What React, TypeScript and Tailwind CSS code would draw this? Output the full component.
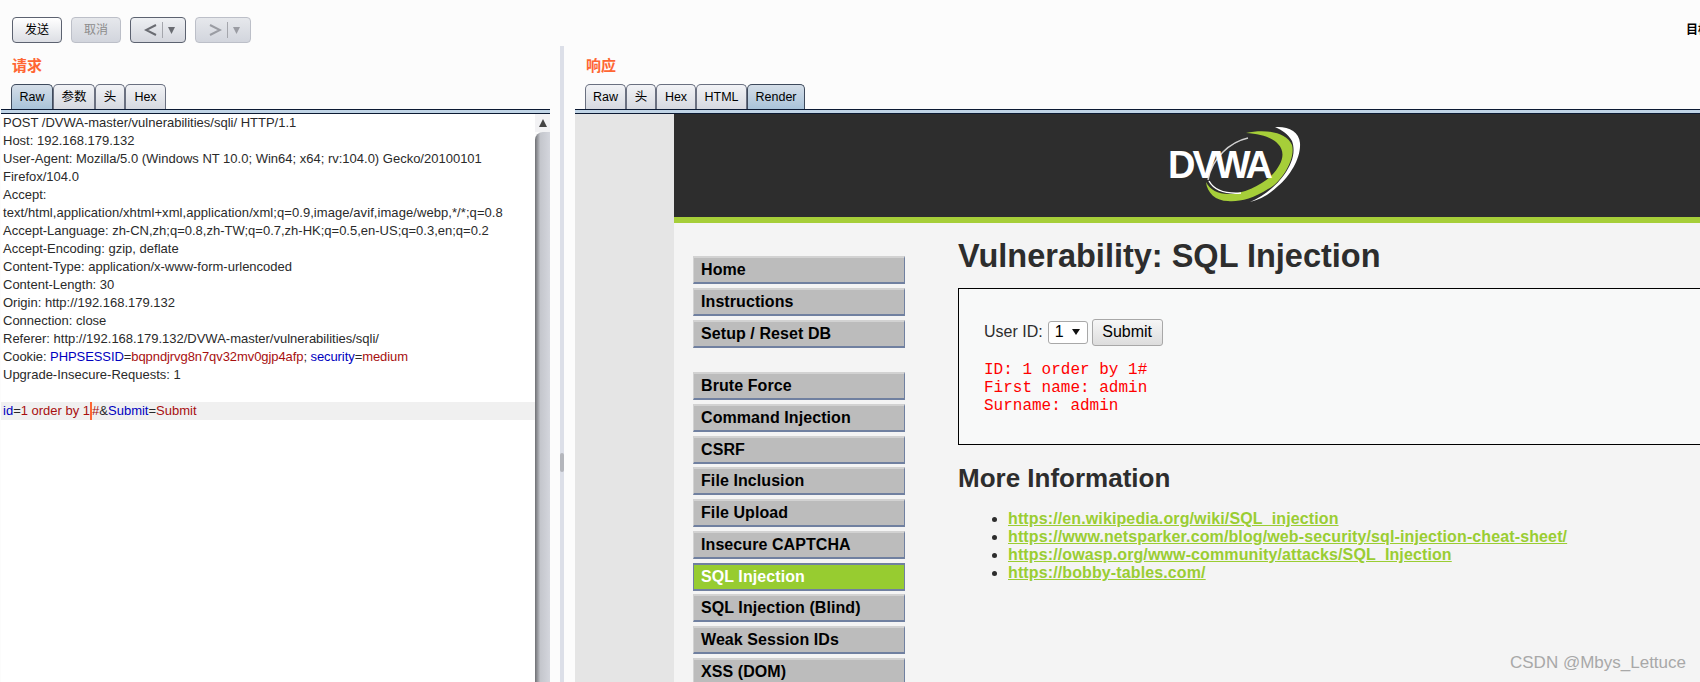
const blue = "text-[#0000c0]";
const red = "text-[#a80f0f]";

const requestLines = [
  "POST /DVWA-master/vulnerabilities/sqli/ HTTP/1.1",
  "Host: 192.168.179.132",
  "User-Agent: Mozilla/5.0 (Windows NT 10.0; Win64; x64; rv:104.0) Gecko/20100101",
  "Firefox/104.0",
  "Accept:",
  "text/html,application/xhtml+xml,application/xml;q=0.9,image/avif,image/webp,*/*;q=0.8",
  "Accept-Language: zh-CN,zh;q=0.8,zh-TW;q=0.7,zh-HK;q=0.5,en-US;q=0.3,en;q=0.2",
  "Accept-Encoding: gzip, deflate",
  "Content-Type: application/x-www-form-urlencoded",
  "Content-Length: 30",
  "Origin: http://192.168.179.132",
  "Connection: close",
  "Referer: http://192.168.179.132/DVWA-master/vulnerabilities/sqli/",
];

const menuTop = ["Home", "Instructions", "Setup / Reset DB"];
const menuVulns = [
  "Brute Force",
  "Command Injection",
  "CSRF",
  "File Inclusion",
  "File Upload",
  "Insecure CAPTCHA",
  "SQL Injection",
  "SQL Injection (Blind)",
  "Weak Session IDs",
  "XSS (DOM)",
];

const links = [
  "https://en.wikipedia.org/wiki/SQL_injection",
  "https://www.netsparker.com/blog/web-security/sql-injection-cheat-sheet/",
  "https://owasp.org/www-community/attacks/SQL_Injection",
  "https://bobby-tables.com/",
];

function ToolButton({label, disabled}: {label: string; disabled?: boolean}) {
  return (
    <div
      className={`w-[50px] h-[26px] rounded-[4px] border flex items-center justify-center text-[12px] bg-linear-to-b ${
        disabled
          ? "border-[#bcbfc8] from-[#e6e8ec] to-[#d2d5dd] text-[#8c8c8c]"
          : "border-[#5c6270] from-[#ffffff] to-[#dcdee4] text-black"
      }`}
    >
      {label}
    </div>
  );
}

function ArrowButton({dir, disabled}: {dir: "left" | "right"; disabled?: boolean}) {
  const stroke = disabled ? "#9a9ca3" : "#6a6c72";
  return (
    <div
      className={`w-[56px] h-[26px] rounded-[4px] border flex items-center pl-[13px] bg-linear-to-b ${
        disabled
          ? "border-[#bcbfc8] from-[#e6e8ec] to-[#d2d5dd]"
          : "border-[#5c6270] from-[#eef0f3] to-[#d4d6dd]"
      }`}
    >
      <svg width="13" height="14" viewBox="0 0 13 14" fill="none" stroke={stroke} strokeWidth="2">
        <path d={dir === "left" ? "M12 2 2 7l10 5" : "M1 2l10 5-10 5"} />
      </svg>
      <div className="w-px h-[16px] bg-[#a4a6ac] ml-[5px] mr-[5px]" />
      <svg width="7" height="7" viewBox="0 0 7 7" fill={stroke}>
        <path d="M0 0h7L3.500 7z" />
      </svg>
    </div>
  );
}

function Tab({label, active, width}: {label: string; active?: boolean; width: string}) {
  return (
    <div
      className={`${width} h-[25px] rounded-t-[5px] border border-b-0 flex items-center justify-center text-[12.5px] text-black bg-linear-to-b ${
        active
          ? "border-[#3e4a5c] from-[#d5dee8] to-[#a9c3d9]"
          : "border-[#6a7080] from-[#f2f3f6] to-[#d6d9e0]"
      }`}
    >
      {label}
    </div>
  );
}

function Band() {
  return <div className="h-[5px] shrink-0 border-y border-[#0c1a33] bg-[#c0d4e6]" />;
}

function MenuItem({label}: {label: string}) {
  const active = label === "SQL Injection";
  return (
    <div
      className={`h-[28px] shrink-0 border-t-2 border-l border-r border-b-2 pl-[7px] flex items-center text-[16px] font-bold tracking-[0.08px] ${
        active
          ? "bg-[#97cc30] text-white border-t-[#7080a0] border-l-[#7080a0] border-r-[#7080a0] border-b-[#7080a0]"
          : "bg-[#bcbcbc] text-black border-t-[#d2d2d2] border-l-[#d2d2d2] border-r-[#7080a0] border-b-[#7080a0]"
      }`}
    >
      {label}
    </div>
  );
}

function Logo() {
  return (
    <svg width="134" height="78" viewBox="0 0 134 78" className="mt-[12px]">
      <path d="M107 1C120 0 131 5 132 17 133 32 122 50 110 60 102 68 92 74 82 76 95 71 108 60 116 49 124 38 128 26 124 15 120 8 114 4 107 1z" fill="#ffffff" />
      <path d="M78 7C95 3 118 5 124 19 128 34 112 58 100 63 85 73 70 76 60 75 48 75 39 67 38 56 42 64 50 68 60 68 75 68 92 60 103 50 115 38 118 26 110 18 104 11 92 8 78 7z" fill="#a6ce39" />
      <path d="M80 12C62 16 44 32 40 54" fill="none" stroke="#d0d0d0" strokeWidth="1.5" />
      <path d="M41 55C46 64 58 68 73 67" fill="none" stroke="#ffffff" strokeWidth="1.5" />
      <text x="0" y="52" fontFamily="'Liberation Sans', sans-serif" fontWeight="700" fontSize="38" letterSpacing="-3" fill="#ffffff">
        DVWA
      </text>
    </svg>
  );
}

export default function App() {
  return (
    <div className="relative w-[1700px] h-[682px] overflow-hidden bg-[#fcfcfc] flex flex-col font-['Liberation_Sans','Noto_Sans_CJK_SC',sans-serif]">
      <div className="h-[46px] shrink-0 flex items-start pt-[17px] pl-[12px] gap-[9px]">
        <ToolButton label="发送" />
        <ToolButton label="取消" disabled />
        <ArrowButton dir="left" />
        <ArrowButton dir="right" disabled />
        <div className="ml-auto mr-0 w-[14px] overflow-hidden whitespace-nowrap text-[12px] font-bold text-black mt-[4px]">
          目标: http
        </div>
      </div>

      <div className="flex-1 min-h-0 flex">
        {/* request pane */}
        <div className="w-[549px] ml-px shrink-0 flex flex-col">
          <div className="h-[38px] shrink-0 pl-[11px] pt-[11px] text-[15px] leading-[18px] font-bold text-[#ff6633]">请求</div>
          <div className="flex pl-[10px] shrink-0">
            <Tab label="Raw" active width="w-[42px]" />
            <Tab label="参数" width="w-[42px]" />
            <Tab label="头" width="w-[30px]" />
            <Tab label="Hex" width="w-[41px]" />
          </div>
          <Band />
          <div className="flex-1 min-h-0 flex">
            <div className="flex-1 bg-white text-[13px] leading-[18px] text-[#2a2a2a] whitespace-nowrap overflow-hidden">
              {requestLines.map((line) => (
                <div key={line} className={`pl-[2px] h-[18px] ${line.startsWith("text/html") ? "tracking-[0.07px]" : ""}`}>
                  {line}
                </div>
              ))}
              <div className="pl-[2px] h-[18px] tracking-[-0.08px]">
                Cookie: <span className={blue}>PHPSESSID</span>=<span className={red}>bqpndjrvg8n7qv32mv0gjp4afp</span>; <span className={blue}>security</span>=<span className={red}>medium</span>
              </div>
              <div className="pl-[2px] h-[18px]">Upgrade-Insecure-Requests: 1</div>
              <div className="h-[18px]" />
              <div className="pl-[2px] h-[18px] bg-[#f0f0f0]">
                <span className={blue}>id</span>=<span className={red}>1 order by 1</span>
                <span className="inline-block w-[2px] h-[18px] bg-[#ff6633] align-top" />
                <span className={red}>#</span>&amp;<span className={blue}>Submit</span>=<span className={red}>Submit</span>
              </div>
            </div>
            <div className="w-[15px] shrink-0 flex flex-col">
              <div className="h-[18px] shrink-0 bg-[#f2f2f4] flex items-center justify-center">
                <svg width="8" height="8" viewBox="0 0 8 8" fill="#444">
                  <path d="M4 0l4 8H0z" />
                </svg>
              </div>
              <div className="flex-1 rounded-tl-[8px] bg-linear-to-r from-[#6f7074] via-[#c4c6cc] via-35% to-[#d4d6dd]" />
            </div>
          </div>
        </div>

        {/* splitter */}
        <div className="w-[10px] shrink-0" />
        <div className="w-[4px] shrink-0 bg-[#dcdfe8] flex flex-col items-center pt-[407px]">
          <div className="w-[4px] h-[19px] rounded-[2px] bg-[#b4b6bc]" />
        </div>
        <div className="w-[11px] shrink-0" />

        {/* response pane */}
        <div className="flex-1 min-w-0 flex flex-col">
          <div className="h-[38px] shrink-0 pl-[11px] pt-[11px] text-[15px] leading-[18px] font-bold text-[#ff6633]">响应</div>
          <div className="flex pl-[10px] shrink-0">
            <Tab label="Raw" width="w-[41px]" />
            <Tab label="头" width="w-[30px]" />
            <Tab label="Hex" width="w-[40px]" />
            <Tab label="HTML" width="w-[51px]" />
            <Tab label="Render" active width="w-[58px]" />
          </div>
          <Band />
          <div className="flex-1 min-h-0 flex">
            <div className="w-[99px] shrink-0 bg-[#e5e5e5]" />
            <div className="flex-1 min-w-0 flex flex-col bg-[#f4f4f4]">
              <div className="h-[109px] shrink-0 bg-[#2d2d2d] border-b-[6px] border-[#a6ce39] flex justify-center">
                <div className="ml-[96px]">
                  <Logo />
                </div>
              </div>
              <div className="flex-1 min-h-0 flex overflow-hidden">
                <div className="w-[212px] ml-[19px] shrink-0 pt-[33px] flex flex-col gap-[3.75px]">
                  {menuTop.map((m) => (
                    <MenuItem key={m} label={m} />
                  ))}
                  <div className="h-[17px] shrink-0" />
                  {menuVulns.map((m) => (
                    <MenuItem key={m} label={m} />
                  ))}
                </div>
                <div className="ml-[53px] flex-1 min-w-0 text-[#2d2d2d]">
                  <h1 className="pt-[15px] text-[32.5px] leading-[37px] font-bold whitespace-nowrap">Vulnerability: SQL Injection</h1>
                  <div className="mt-[13px] w-[800px] h-[157px] border border-black bg-[#f8f9f9] pl-[25px]">
                    <div className="mt-[29px] h-[28px] flex items-center text-[16px]">
                      <span>User ID:</span>
                      <div className="ml-[5px] w-[40px] h-[23px] rounded-[3px] border border-[#a8a8a8] bg-white flex items-center pl-[6px] gap-[8px] text-black">
                        1
                        <svg width="8" height="6" viewBox="0 0 8 6" fill="#111">
                          <path d="M0 0h8L4 6z" />
                        </svg>
                      </div>
                      <div className="ml-[4px] w-[71px] h-[27px] rounded-[3px] border border-[#a8a8a8] bg-linear-to-b from-[#f6f6f6] to-[#dddddd] flex items-center justify-center text-black">
                        Submit
                      </div>
                    </div>
                    <pre className="mt-[15px] text-[16px] leading-[18px] text-[#ff0000] font-['Liberation_Mono',monospace]">
                      {"ID: 1 order by 1#\nFirst name: admin\nSurname: admin"}
                    </pre>
                  </div>
                  <h2 className="mt-[18px] text-[26px] leading-[30px] font-bold">More Information</h2>
                  <ul className="mt-[17px] pl-[50px] list-disc marker:text-[#2d2d2d] text-[16px] leading-[18px]">
                    {links.map((l) => (
                      <li key={l}>
                        <a className="font-bold tracking-[0.12px] text-[#9acd32] underline">{l}</a>
                      </li>
                    ))}
                  </ul>
                </div>
              </div>
            </div>
          </div>
        </div>
      </div>

      <div className="absolute left-[1510px] top-[654px] text-[17px] leading-[18px] text-[#a8a8a8] whitespace-nowrap">CSDN @Mbys_Lettuce</div>
    </div>
  );
}
